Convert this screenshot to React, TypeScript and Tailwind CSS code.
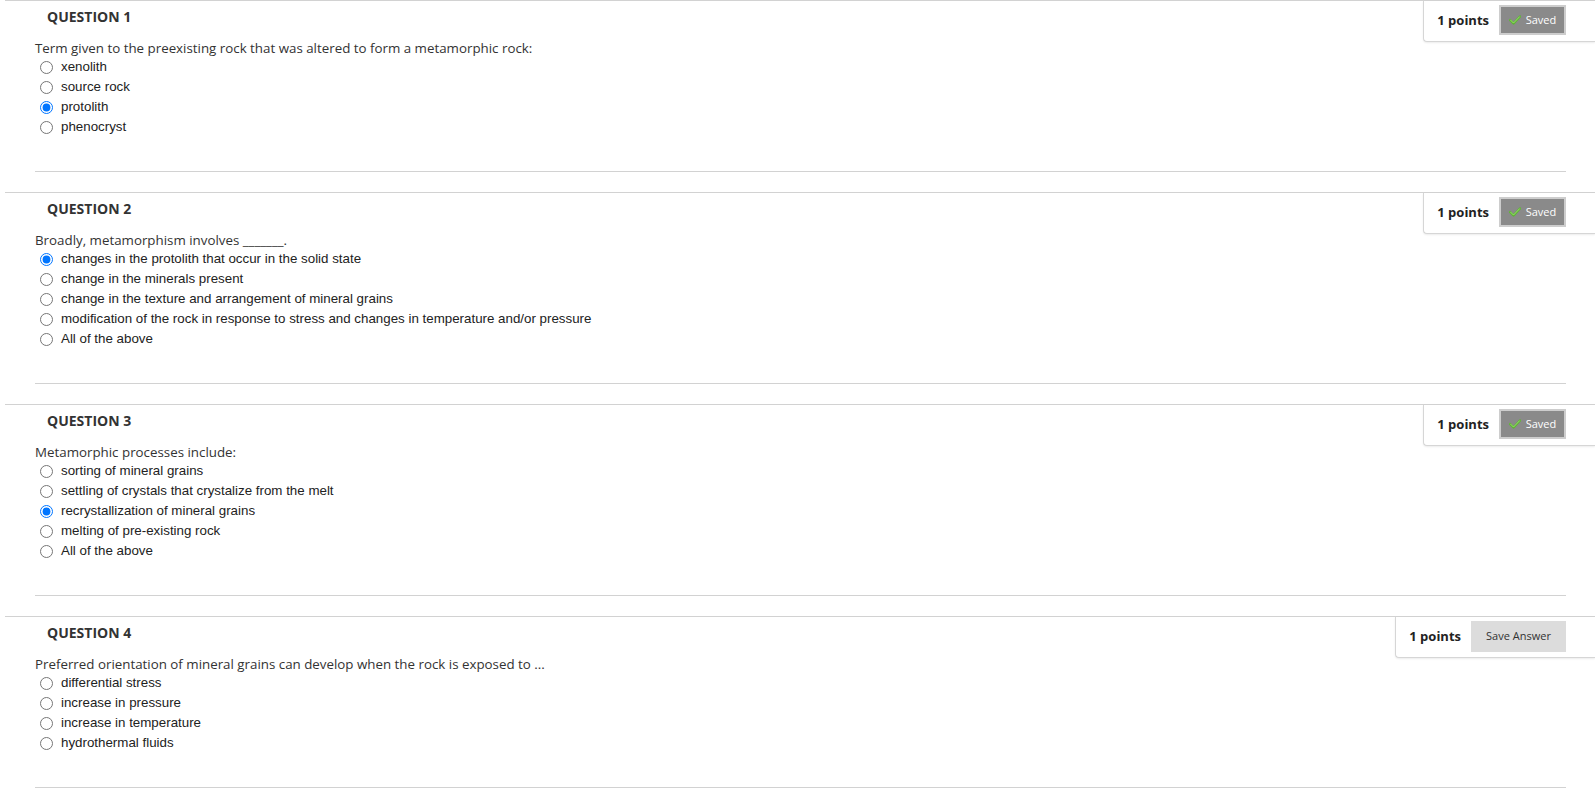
import React from "react";

type Question = {
  num: number;
  text: string;
  options: string[];
  selected: number | null;
  saved: boolean;
};

const questions: Question[] = [
  {
    num: 1,
    text: "Term given to the preexisting rock that was altered to form a metamorphic rock:",
    options: ["xenolith", "source rock", "protolith", "phenocryst"],
    selected: 2,
    saved: true,
  },
  {
    num: 2,
    text: "Broadly, metamorphism involves _______.",
    options: [
      "changes in the protolith that occur in the solid state",
      "change in the minerals present",
      "change in the texture and arrangement of mineral grains",
      "modification of the rock in response to stress and changes in temperature and/or pressure",
      "All of the above",
    ],
    selected: 0,
    saved: true,
  },
  {
    num: 3,
    text: "Metamorphic processes include:",
    options: [
      "sorting of mineral grains",
      "settling of crystals that crystalize from the melt",
      "recrystallization of mineral grains",
      "melting of pre-existing rock",
      "All of the above",
    ],
    selected: 2,
    saved: true,
  },
  {
    num: 4,
    text: "Preferred orientation of mineral grains can develop when the rock is exposed to ...",
    options: [
      "differential stress",
      "increase in pressure",
      "increase in temperature",
      "hydrothermal fluids",
    ],
    selected: null,
    saved: false,
  },
];

function CheckIcon() {
  return (
    <svg width="12" height="10" viewBox="0 0 12 10" className="mr-[5px]">
      <path d="M1 5 L4.5 8.5 L11 1.5" fill="none" stroke="#5fb336" strokeWidth="2.4" strokeLinecap="round" strokeLinejoin="round" />
      <path d="M1.5 5 L4.5 8 L10.5 1.8" fill="none" stroke="#9be070" strokeWidth="0.9" strokeLinecap="round" strokeLinejoin="round" />
    </svg>
  );
}

function PointsBox({ saved }: { saved: boolean }) {
  return (
    <div className="h-[41px] flex items-start pl-[13px] pr-[29px] bg-white border-l border-b border-[#d6d6d6] rounded-bl-[4px] shadow-[0_1px_2px_rgba(0,0,0,0.08)]">
      <span className="mt-[10px] text-[13px] leading-[18px] font-bold text-[#222] font-['Open_Sans',sans-serif]">
        1 points
      </span>
      {saved ? (
        <div className="ml-[10px] mt-[4px] w-[67px] h-[30px] flex items-center justify-center bg-[#8a8a8a] border-2 border-[#cdcdcd] text-white text-[11px] font-['Open_Sans',sans-serif]">
          <CheckIcon />
          Saved
        </div>
      ) : (
        <div className="ml-[10px] mt-[4px] w-[95px] h-[31px] flex items-center justify-center bg-[#dcdcdc] text-[#333] text-[11px] font-['Open_Sans',sans-serif]">
          Save Answer
        </div>
      )}
    </div>
  );
}

function QuestionBlock({ q }: { q: Question }) {
  return (
    <section className="ml-[5px] border-t border-[#d2d2d2] pb-[20px]">
      <div className="flex justify-between items-start h-[41px]">
        <h3 className="pl-[42px] pt-[7px] text-[14px] leading-[18px] font-bold text-[#333] font-['Open_Sans',sans-serif]">
          QUESTION {q.num}
        </h3>
        <PointsBox saved={q.saved} />
      </div>
      <div className="pl-[30px]">
        <p className="-mt-[1px] text-[13.33px] leading-[15px] text-[#333] font-['Open_Sans',sans-serif]">{q.text}</p>
        <div className="mt-[1px] flex flex-col">
          {q.options.map((opt, i) => (
            <label key={i} className="h-[20px] flex items-center text-[13.33px] text-[#222] font-['Liberation_Sans',Arial,sans-serif]">
              <input
                type="radio"
                name={`q${q.num}`}
                defaultChecked={q.selected === i}
                className="m-0 ml-[5px] mr-[8px] w-[13px] h-[13px]"
              />
              {opt}
            </label>
          ))}
        </div>
        <div className="mt-[34px] mr-[29px] border-t border-[#d2d2d2]" />
      </div>
    </section>
  );
}

export default function App() {
  return (
    <main className="min-h-screen bg-white">
      {questions.map((q) => (
        <QuestionBlock key={q.num} q={q} />
      ))}
    </main>
  );
}
